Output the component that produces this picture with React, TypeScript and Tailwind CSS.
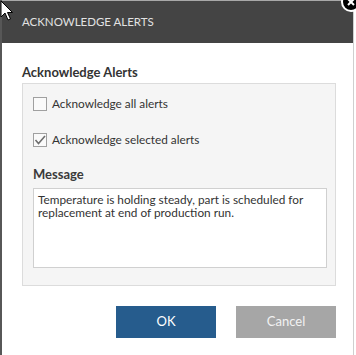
import React, { useState } from "react";

function Cursor() {
   return (
      <svg
         className="absolute left-0 top-0"
         width="14"
         height="22"
         viewBox="0 0 14 22"
      >
         <path
            d="M1 1 L1 17 L5 13 L8 20 L10.5 19 L7.5 12.5 L12.5 12.5 Z"
            fill="#fff"
            stroke="#000"
            strokeWidth="1"
            strokeLinejoin="round"
         />
      </svg>
   );
}

function CloseBadge() {
   return (
      <div className="absolute -right-[5px] -top-[8px] w-[20px] h-[20px] rounded-full bg-white flex items-center justify-center">
         <div className="w-[16px] h-[16px] rounded-full bg-black flex items-center justify-center">
            <svg width="8" height="8" viewBox="0 0 8 8">
               <path d="M1 1 L7 7 M7 1 L1 7" stroke="#fff" strokeWidth="2" />
            </svg>
         </div>
      </div>
   );
}

function Check({ checked, label, onClick }: { checked: boolean; label: string; onClick: () => void }) {
   return (
      <div className="flex items-center h-[14px] cursor-pointer" onClick={onClick}>
         <div className="w-[14px] h-[14px] border border-[#a0a0a0] bg-[#fafafa] flex items-center justify-center">
            {checked && (
               <svg width="12" height="12" viewBox="0 0 12 12">
                  <path d="M1.5 6 L4.5 9.5 L11 2" fill="none" stroke="#6e6e6e" strokeWidth="1.6" />
               </svg>
            )}
         </div>
         <span className="ml-[5px] text-[11.8px] text-[#333]">{label}</span>
      </div>
   );
}

export default function App() {
   const [all, setAll] = useState(false);
   const [selected, setSelected] = useState(true);
   const [msg, setMsg] = useState(
      "Temperature is holding steady, part is scheduled for replacement at end of production run."
   );

   return (
      <div
         className="relative w-[356px] h-[355px] bg-white overflow-hidden"
         style={{ fontFamily: "Lato, 'Open Sans', sans-serif" }}
      >
         <div className="w-[354px] h-[355px] border-l-2 border-l-[#575757] border-r border-r-[#cfcfcf] flex flex-col">
            <div className="h-[43px] bg-[#444444] border-t border-t-[#a8a8a8] flex items-center pl-[20px]">
               <span className="text-[11.5px] text-[#e2e2e2]">ACKNOWLEDGE ALERTS</span>
            </div>
            <div className="pl-[20px] pt-[21px]">
               <div className="text-[13px] font-bold text-[#333] leading-[16px]">Acknowledge Alerts</div>
               <div className="mt-[3px] w-[314px] h-[203px] bg-[#f5f5f5] border border-[#dcdcdc] pl-[10px] pt-[13px]">
                  <Check checked={all} label="Acknowledge all alerts" onClick={() => setAll(!all)} />
                  <div className="h-[22px]" />
                  <Check checked={selected} label="Acknowledge selected alerts" onClick={() => setSelected(!selected)} />
                  <div className="mt-[19px] text-[13px] font-bold text-[#3a3a3a] leading-[16px]">Message</div>
                  <textarea
                     value={msg}
                     onChange={(e) => setMsg(e.target.value)}
                     className="mt-[6px] block w-[294px] h-[80px] bg-white border border-[#d0d0d0] px-[4px] pt-[4px] text-[11.8px] leading-[13px] text-[#333] resize-none outline-none"
                  />
               </div>
               <div className="flex justify-end gap-[20px] pr-[17px] mt-[20px]">
                  <button className="w-[100px] h-[32px] bg-[#265c8d] text-white text-[13px]">OK</button>
                  <button className="w-[100px] h-[32px] bg-[#a6a6a6] text-[#f2f2f2] text-[13px]">Cancel</button>
               </div>
            </div>
         </div>
         <CloseBadge />
         <Cursor />
      </div>
   );
}
